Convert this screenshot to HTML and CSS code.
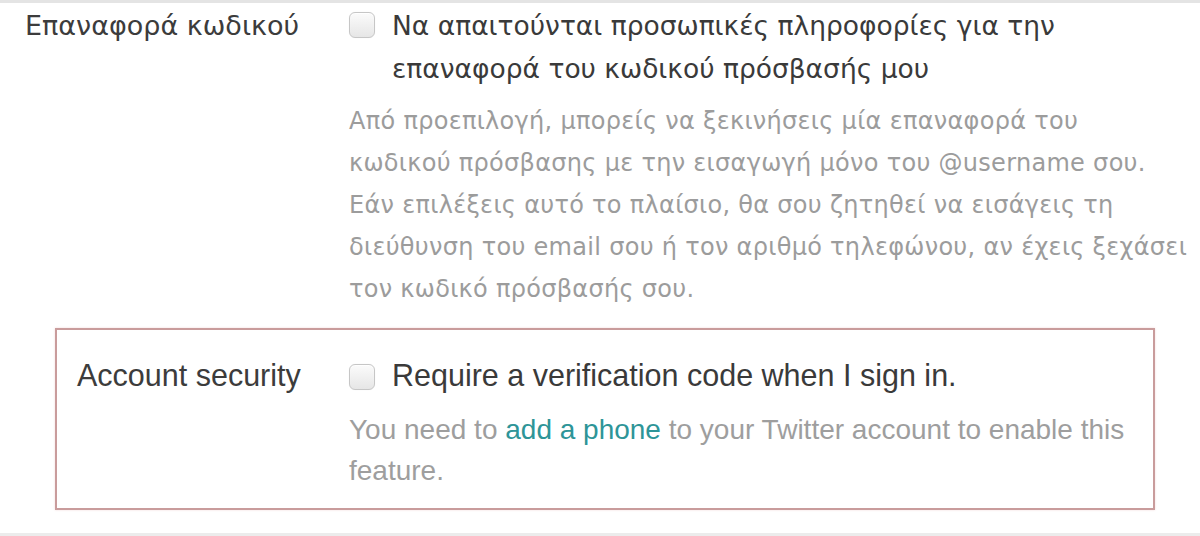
FILE: index.html
```html
<!DOCTYPE html>
<html lang="el">
<head>
<meta charset="utf-8">
<link rel="stylesheet" href="styles.css">
</head>
<body>
<div class="page">
  <div class="topband"></div>
  <div class="row greek">
    <div class="label">Επαναφορά κωδικού</div>
    <div class="field">
      <label class="check">
        <span class="box"></span>
        <span class="check-text">Να απαιτούνται προσωπικές πληροφορίες για την<br>επαναφορά του κωδικού πρόσβασής μου</span>
      </label>
      <p class="desc">Από προεπιλογή, μπορείς να ξεκινήσεις μία επαναφορά του<br>κωδικού πρόσβασης με την εισαγωγή μόνο του @username σου.<br>Εάν επιλέξεις αυτό το πλαίσιο, θα σου ζητηθεί να εισάγεις τη<br>διεύθυνση του email σου ή τον αριθμό τηλεφώνου, αν έχεις ξεχάσει<br>τον κωδικό πρόσβασής σου.</p>
    </div>
  </div>
  <div class="highlight">
    <div class="row english">
      <div class="label">Account security</div>
      <div class="field">
        <label class="check">
          <span class="box"></span>
          <span class="check-text">Require a verification code when I sign in.</span>
        </label>
        <p class="desc">You need to <a href="#" class="link">add a phone</a> to your Twitter account to enable this<br>feature.</p>
      </div>
    </div>
  </div>
  <div class="bottomband"></div>
</div>
</body>
</html>
```

FILE: styles.css
```css
html, body {
  margin: 0;
  padding: 0;
  background: #ffffff;
}

.page {
  width: 1200px;
  height: 536px;
  display: flex;
  flex-direction: column;
  overflow: hidden;
}

.topband {
  height: 3px;
  background: #e4e4e4;
  flex: none;
}

.bottomband {
  margin-top: auto;
  height: 3px;
  background: #ececec;
  flex: none;
}

.row {
  display: flex;
  align-items: flex-start;
}

.row.greek {
  padding-left: 25px;
  padding-top: 1px;
  font-family: "DejaVu Sans", "Liberation Sans", sans-serif;
}

.row.greek .label {
  width: 324px;
  flex: none;
  font-size: 27px;
  line-height: 43px;
  color: #3c3c3c;
  white-space: nowrap;
}

.field {
  display: flex;
  flex-direction: column;
}

.row.greek .field {
  width: 830px;
}

.check {
  display: flex;
  align-items: flex-start;
}

.box {
  flex: none;
  width: 24px;
  height: 24px;
  margin-top: 8px;
  margin-right: 17px;
  border: 1px solid #c6c6c6;
  border-radius: 6px;
  background: linear-gradient(#fbfbfb, #e6e6e6);
  box-shadow: inset 0 1px 1px rgba(255,255,255,0.9), 0 0 1px rgba(0,0,0,0.08);
}

.row.greek .check-text {
  font-size: 26.5px;
  line-height: 43px;
  color: #3a3a3a;
  white-space: nowrap;
}

.row.greek .desc {
  margin: 10px 0 0 0;
  font-size: 24px;
  letter-spacing: 0.3px;
  line-height: 42px;
  color: #9c9c9c;
  white-space: nowrap;
}

.highlight {
  margin: 18px 0 0 55px;
  width: 1096px;
  height: 178px;
  border: 2px solid #c99c9c;
  box-shadow: 0 0 2px rgba(220,150,150,0.35);
  flex: none;
}

.row.english {
  padding: 24px 0 0 20px;
  font-family: "Liberation Sans", Arial, sans-serif;
}

.row.english .label {
  width: 272px;
  flex: none;
  font-size: 30.5px;
  line-height: 43px;
  color: #3c3c3c;
  white-space: nowrap;
}

.row.english .check-text {
  font-size: 30.5px;
  line-height: 43px;
  color: #3a3a3a;
  white-space: nowrap;
}

.row.english .box {
  margin-top: 10px;
}

.row.english .field {
  width: 800px;
}

.row.english .desc {
  margin: 12px 0 0 0;
  font-size: 28px;
  line-height: 41px;
  color: #9e9e9e;
  white-space: nowrap;
}

.link {
  color: #2e9598;
  text-decoration: none;
}
```
